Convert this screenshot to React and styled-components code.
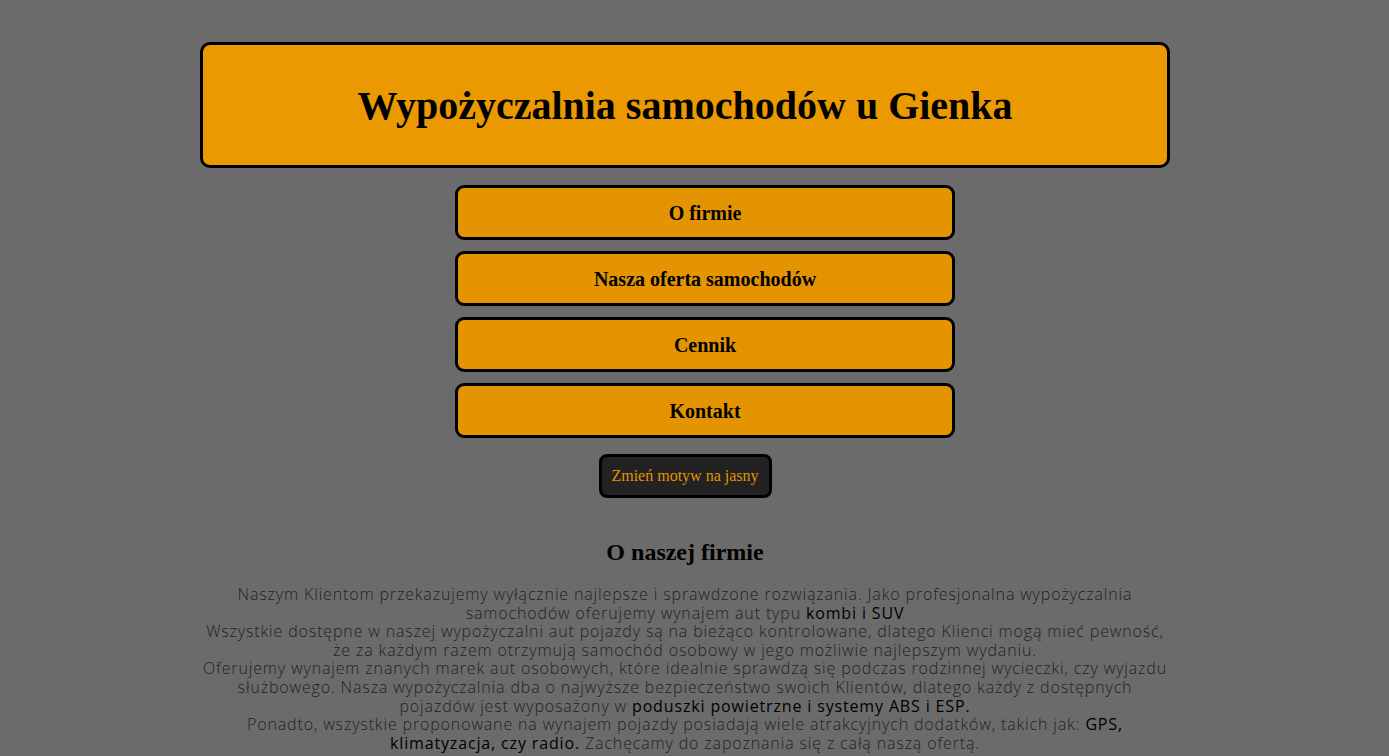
import styled, { createGlobalStyle } from "styled-components";

const Global = createGlobalStyle`
    body{
        margin: 0;
        background: #6b6b6b;
        font-family: 'Liberation Serif', 'Times New Roman', serif;
    }
`

const navItems = ["O firmie", "Nasza oferta samochodów", "Cennik", "Kontakt"];

export default function App(){
    return(
        <Page>
            <Global />
            <Header>
                <h1>Wypożyczalnia samochodów u Gienka</h1>
            </Header>
            <Nav>
                {navItems.map((item) => (
                    <NavButton key={item}>{item}</NavButton>
                ))}
            </Nav>
            <ThemeButton>Zmień motyw na jasny</ThemeButton>
            <Section>
                <h2>O naszej firmie</h2>
                <p>
                    Naszym Klientom przekazujemy wyłącznie najlepsze i sprawdzone rozwiązania. Jako profesjonalna wypożyczalnia samochodów oferujemy wynajem aut typu <b>kombi i SUV</b>
                    <br />
                    Wszystkie dostępne w naszej wypożyczalni aut pojazdy są na bieżąco kontrolowane, dlatego Klienci mogą mieć pewność, że za każdym razem otrzymują samochód osobowy w jego możliwie najlepszym wydaniu.
                    <br />
                    Oferujemy wynajem znanych marek aut osobowych, które idealnie sprawdzą się podczas rodzinnej wycieczki, czy wyjazdu służbowego. Nasza wypożyczalnia dba o najwyższe bezpieczeństwo swoich Klientów, dlatego każdy z dostępnych pojazdów jest wyposażony w <b>poduszki powietrzne i systemy ABS i ESP.</b>
                    <br />
                    Ponadto, wszystkie proponowane na wynajem pojazdy posiadają wiele atrakcyjnych dodatków, takich jak: <b>GPS, klimatyzacja, czy radio.</b> Zachęcamy do zapoznania się z całą naszą ofertą.
                </p>
            </Section>
        </Page>
    )
}

const Page = styled.div`
    display: flex;
    flex-direction: column;
    align-items: center;
    padding: 42px 19px 0 0;
    min-height: 100vh;
    box-sizing: border-box;
`

const Header = styled.header`
    width: 970px;
    height: 126px;
    box-sizing: border-box;
    background: #eb9900;
    border: 3px solid #000;
    border-radius: 10px;
    display: flex;
    align-items: center;
    justify-content: center;
    h1{
        margin: 0;
        font-size: 40px;
        font-weight: 700;
        color: #000;
    }
`

const Nav = styled.nav`
    display: flex;
    flex-direction: column;
    gap: 11px;
    margin-top: 17px;
    padding-left: 40px;
`

const NavButton = styled.div`
    width: 500px;
    height: 55px;
    box-sizing: border-box;
    background: #e39400;
    border: 3px solid #000;
    border-radius: 9px;
    display: flex;
    align-items: center;
    justify-content: center;
    padding-top: 2px;
    font-size: 20px;
    font-weight: 700;
    color: #000;
    cursor: pointer;
`

const ThemeButton = styled.button`
    margin-top: 16px;
    width: 173px;
    height: 44px;
    box-sizing: border-box;
    background: #222222;
    color: #e39400;
    border: 3px solid #000;
    border-radius: 8px;
    font-family: 'Liberation Serif', 'Times New Roman', serif;
    font-size: 16px;
    cursor: pointer;
`

const Section = styled.section`
    width: 970px;
    text-align: center;
    margin-top: 41px;
    h2{
        margin: 0 0 19px;
        font-size: 24px;
        font-weight: 700;
        color: #000;
    }
    p{
        margin: 0;
        font-family: 'Open Sans', sans-serif;
        font-weight: 300;
        font-size: 16px;
        letter-spacing: 0.85px;
        line-height: 18.6px;
        color: #222;
    }
    b{
        font-weight: 400;
        color: #000;
    }
`
